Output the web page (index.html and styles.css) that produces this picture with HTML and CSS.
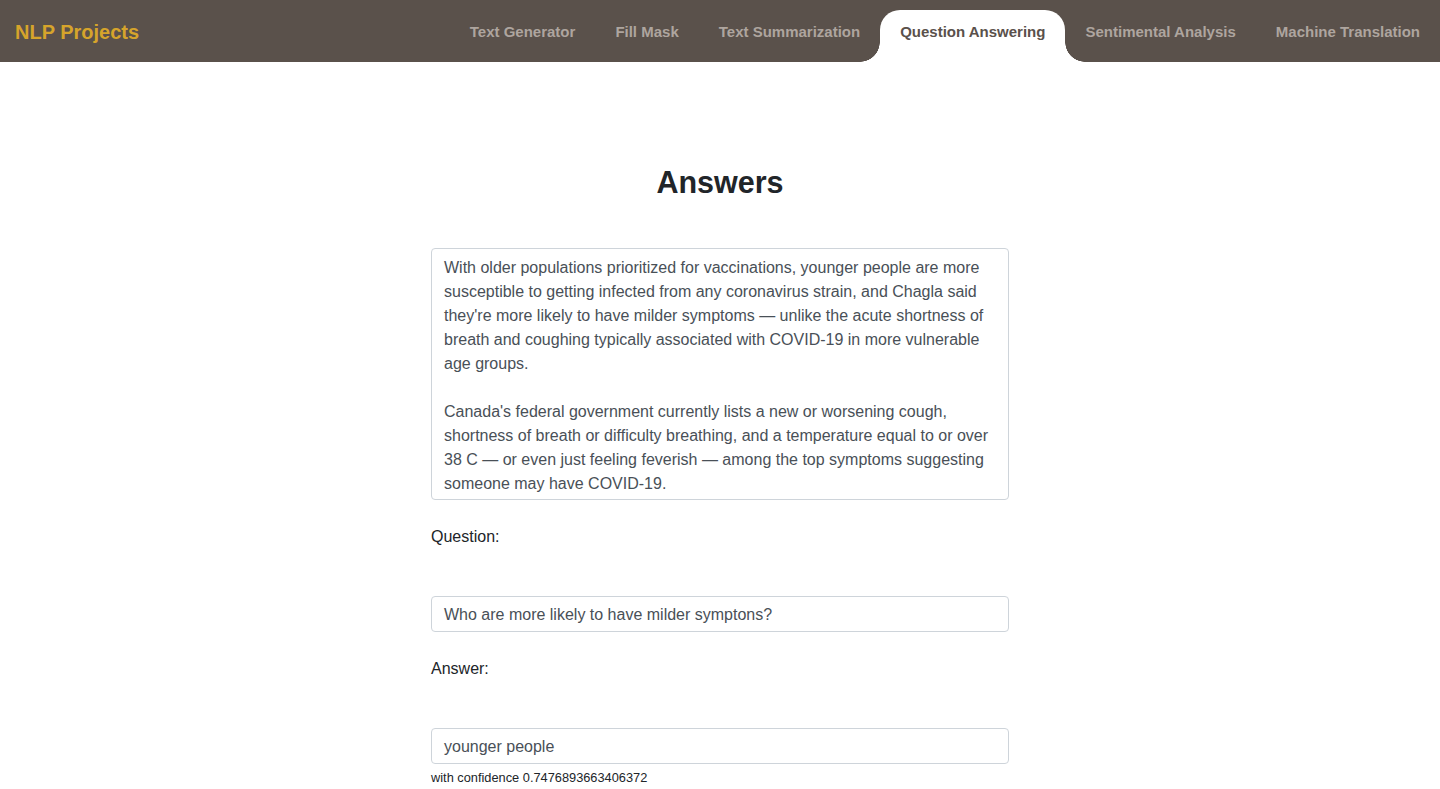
FILE: index.html
```html
<!DOCTYPE html>
<html lang="en">
<head>
<meta charset="utf-8">
<title>NLP Projects - Question Answering</title>
<link rel="stylesheet" href="styles.css">
</head>
<body>
<nav class="navbar">
  <a class="brand" href="#">NLP Projects</a>
  <ul class="tabs">
    <li class="tab"><a href="#">Text Generator</a></li>
    <li class="tab"><a href="#">Fill Mask</a></li>
    <li class="tab"><a href="#">Text Summarization</a></li>
    <li class="tab active"><a href="#">Question Answering</a></li>
    <li class="tab"><a href="#">Sentimental Analysis</a></li>
    <li class="tab"><a href="#">Machine Translation</a></li>
  </ul>
</nav>
<main class="container">
  <h2 class="title">Answers</h2>
  <div class="form-control passage">
    <p>With older populations prioritized for vaccinations, younger people are more<br>susceptible to getting infected from any coronavirus strain, and Chagla said<br>they're more likely to have milder symptoms — unlike the acute shortness of<br>breath and coughing typically associated with COVID-19 in more vulnerable<br>age groups.</p>
    <p>Canada's federal government currently lists a new or worsening cough,<br>shortness of breath or difficulty breathing, and a temperature equal to or over<br>38 C — or even just feeling feverish — among the top symptoms suggesting<br>someone may have COVID-19.</p>
  </div>
  <label class="label">Question:</label>
  <div class="form-control field">Who are more likely to have milder symptons?</div>
  <label class="label">Answer:</label>
  <div class="form-control field">younger people</div>
  <small class="form-text">with confidence 0.7476893663406372</small>
</main>
</body>
</html>
```
FILE: styles.css
```css
* { box-sizing: border-box; }
html, body { margin: 0; padding: 0; }
body {
  font-family: "Liberation Sans", Arial, Helvetica, sans-serif;
  color: #212529;
  background: #fff;
  font-size: 16px;
  line-height: 1.5;
}
.navbar {
  height: 62px;
  background: #5a514b;
  display: flex;
  justify-content: space-between;
  align-items: flex-end;
}
.brand {
  align-self: center;
  padding-left: 15px;
  padding-top: 2px;
  font-size: 20px;
  font-weight: bold;
  line-height: 24px;
  color: #d6a42b;
  text-decoration: none;
}
.tabs {
  list-style: none;
  margin: 0;
  padding: 0;
  display: flex;
  align-items: flex-end;
}
.tab {
  position: relative;
  height: 52px;
  padding: 12px 20px 0;
}
.tab a {
  display: block;
  font-size: 15px;
  font-weight: bold;
  line-height: 20px;
  color: #aea59f;
  text-decoration: none;
  white-space: nowrap;
}
.tab.active {
  background: #fff;
  border-radius: 20px 20px 0 0;
}
.tab.active a { color: #5a514b; }
.tab.active::before,
.tab.active::after {
  content: "";
  position: absolute;
  bottom: 0;
  width: 20px;
  height: 20px;
}
.tab.active::before {
  left: -20px;
  background: radial-gradient(circle at 0 0, transparent 19.5px, #fff 20px);
}
.tab.active::after {
  right: -20px;
  background: radial-gradient(circle at 100% 0, transparent 19.5px, #fff 20px);
}
.container {
  width: 578px;
  margin: 0 auto;
  padding-top: 102px;
  display: flex;
  flex-direction: column;
}
.title {
  margin: 0 0 48px;
  text-align: center;
  font-size: 30.5px;
  line-height: 36px;
  font-weight: bold;
  color: #212529;
}
.form-control {
  border: 1px solid #ced4da;
  border-radius: 4px;
  color: #495057;
  font-size: 16px;
  background: #fff;
}
.passage {
  height: 252px;
  overflow: hidden;
  padding: 7px 12px 5px;
  line-height: 24px;
}
.passage p {
  margin: 0 0 24px;
  white-space: nowrap;
}
.label {
  display: block;
  margin: 25px 0 47px;
  line-height: 24px;
  color: #212529;
}
.field {
  height: 36px;
  padding: 2px 12px 0;
  line-height: 32px;
}
.form-text {
  display: block;
  margin-top: 4px;
  font-size: 12.8px;
  line-height: 19px;
  color: #212529;
}
```
